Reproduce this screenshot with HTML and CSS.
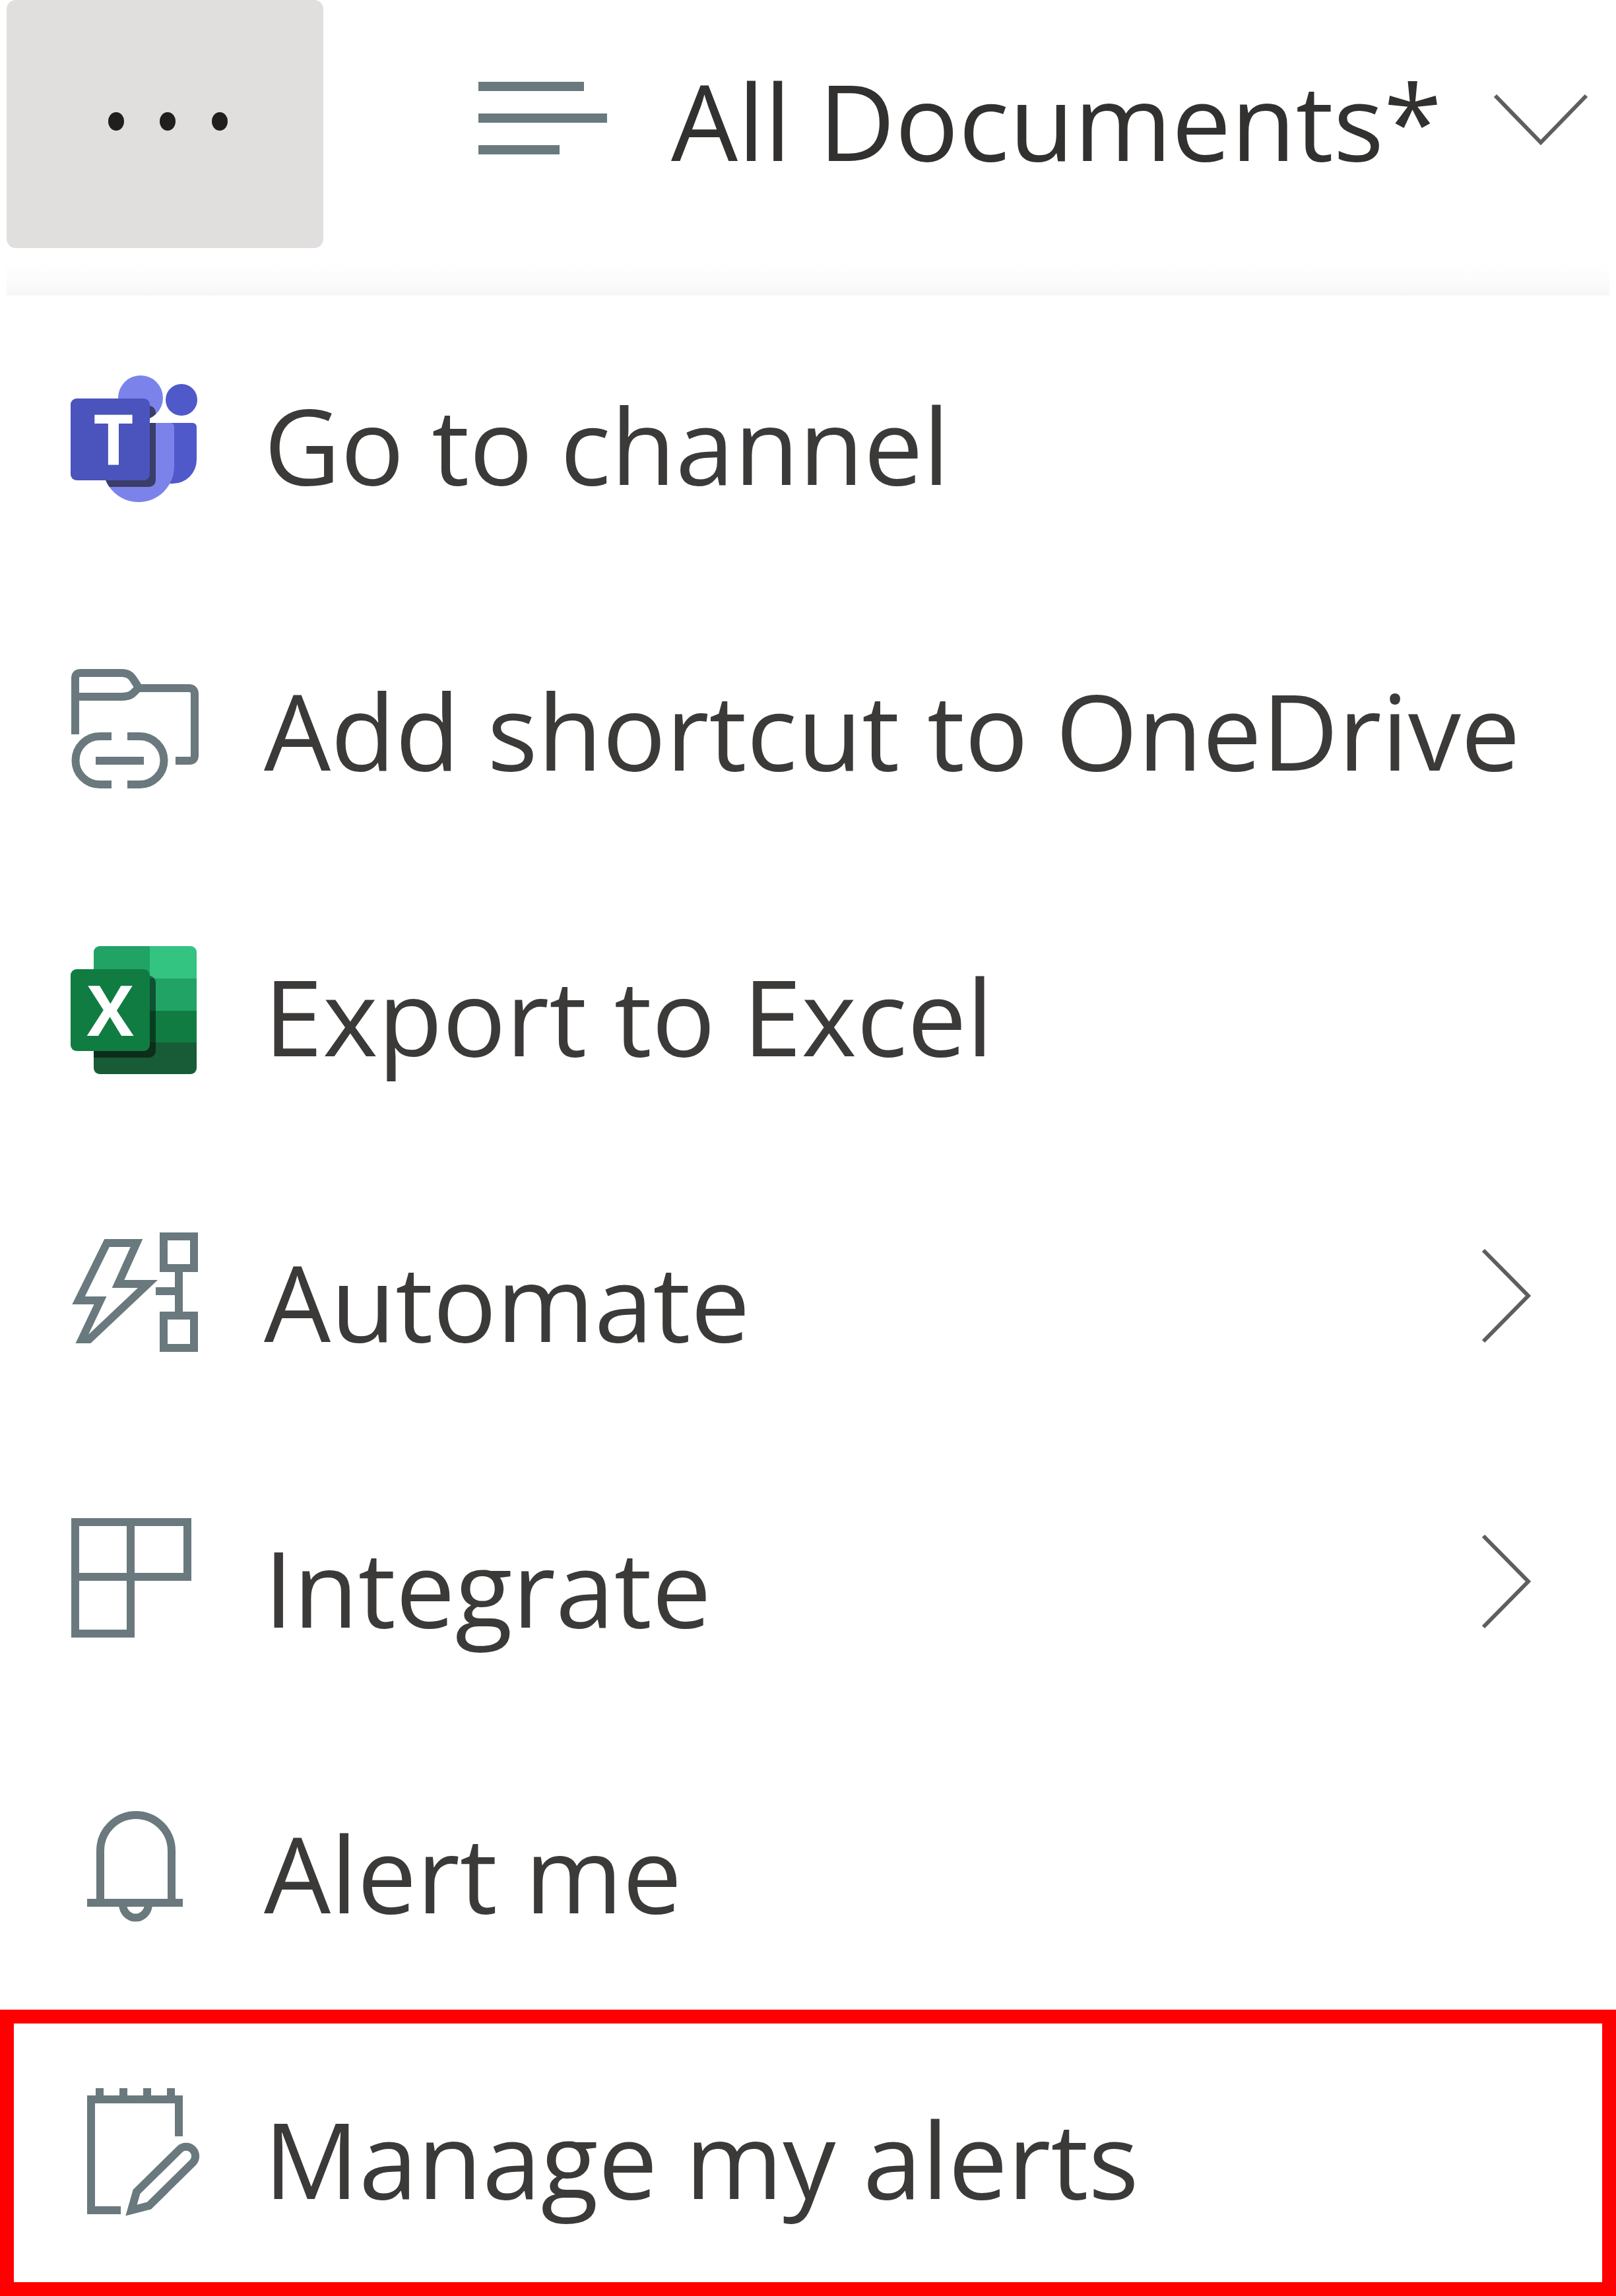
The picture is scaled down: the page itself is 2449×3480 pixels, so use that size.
FILE: index.html
```html
<!DOCTYPE html>
<html lang="en">
<head>
    <meta charset="UTF-8">
    <title>All Documents</title>
    <link rel="stylesheet" href="styles.css">
</head>
<body>
    <header class="command-bar">
        <button class="more-button" type="button" aria-label="More options" aria-expanded="true">
            <svg class="dots" viewBox="0 0 200 40">
                <ellipse cx="26" cy="20" rx="12" ry="14"/>
                <ellipse cx="104" cy="20" rx="12" ry="14"/>
                <ellipse cx="183" cy="20" rx="12" ry="14"/>
            </svg>
        </button>
        <button class="view-button" type="button">
            <svg class="view-icon" viewBox="0 0 200 120">
                <path d="M0 9H160M0 57H195M0 105H123"/>
            </svg>
            <span class="view-label">All Documents*</span>
            <svg class="chevron-down" viewBox="0 0 144 80">
                <path d="M3 3L72 74L141 3"/>
            </svg>
        </button>
    </header>

    <div class="menu-shadow"></div>

    <nav class="menu">
        <button class="menu-item" type="button">
            <svg class="icon" viewBox="0 0 200 200">
                <defs>
                    <clipPath id="teams-body">
                        <circle cx="107" cy="38" r="34"/>
                        <path d="M50 76H158V142a54 54 0 0 1-108 0z"/>
                    </clipPath>
                </defs>
                <circle cx="107" cy="38" r="34" fill="#7b83eb"/>
                <circle cx="169" cy="41" r="24" fill="#5059c9"/>
                <path d="M140 76H186a6 6 0 0 1 6 6V132a36 36 0 0 1-36 36H140z" fill="#5059c9"/>
                <path d="M50 76H152a6 6 0 0 1 6 6V142a54 54 0 0 1-108 0z" fill="#7b83eb"/>
                <rect x="40" y="50" width="90" height="123" rx="10" fill="#3a3e68" clip-path="url(#teams-body)"/>
                <rect x="1" y="39" width="120" height="124" rx="9" fill="#4b53bc"/>
                <text class="icon-letter" x="66" y="139">T</text>
            </svg>
            <span class="menu-label">Go to channel</span>
        </button>

        <button class="menu-item" type="button">
            <svg class="icon line" viewBox="0 0 200 200">
                <path d="M8 115V30q0-8 8-8H78c16 0 17 9 26 22c-9 10-12 14-26 14H8"/>
                <path d="M102 45H180q9 0 9 9V147q0 8-8 8H160"/>
                <path d="M63 118H45a36 36 0 0 0 0 73H63M87 118H106a36 36 0 0 1 0 73H87M39 155H112"/>
            </svg>
            <span class="menu-label">Add shortcut to OneDrive</span>
        </button>

        <button class="menu-item" type="button">
            <svg class="icon" viewBox="0 0 200 200">
                <defs>
                    <clipPath id="excel-sheet">
                        <rect x="36" y="3" width="156" height="194" rx="9"/>
                    </clipPath>
                </defs>
                <g clip-path="url(#excel-sheet)">
                    <path d="M36 3H121V52H36zM121 52H192V101H121z" fill="#21a366"/>
                    <path d="M121 3H192V52H121z" fill="#33c481"/>
                    <path d="M36 52H121V149H36zM121 101H192V149H121z" fill="#107c41"/>
                    <path d="M36 149H192V197H36z" fill="#185c37"/>
                    <rect x="10" y="48" width="120" height="124" rx="10" fill="#000" fill-opacity=".5"/>
                </g>
                <rect x="1" y="38" width="120" height="124" rx="9" fill="#107c41"/>
                <text class="icon-letter" x="61" y="139">X</text>
            </svg>
            <span class="menu-label">Export to Excel</span>
        </button>

        <button class="menu-item" type="button">
            <svg class="icon line" viewBox="0 0 200 200">
                <path d="M56 20H101L73 82H118L29 166H18L46 107H13z"/>
                <path d="M142 10H188V58H142zM142 130H188V179H142zM165 58V130M130 93H165"/>
            </svg>
            <span class="menu-label">Automate</span>
            <svg class="chevron-right" viewBox="0 0 76 144">
                <path d="M3 3L71 72L3 141"/>
            </svg>
        </button>

        <button class="menu-item" type="button">
            <svg class="icon line" viewBox="0 0 200 200">
                <path d="M8 10H178V93H8zM92 10V179H8V93"/>
            </svg>
            <span class="menu-label">Integrate</span>
            <svg class="chevron-right" viewBox="0 0 76 144">
                <path d="M3 3L71 72L3 141"/>
            </svg>
        </button>

        <button class="menu-item" type="button">
            <svg class="icon line" viewBox="0 0 200 200">
                <path d="M46 153V75a54 54 0 0 1 108 0V153M26 154H171M80 156a19 20 0 0 0 39 0"/>
            </svg>
            <span class="menu-label">Alert me</span>
        </button>

        <button class="menu-item highlighted" type="button">
            <svg class="icon line" viewBox="0 0 200 200">
                <path d="M77 187H32V19H165V75M45 19V2M81 19V2M117 19V2M153 19V2"/>
                <path d="M93 187L101 159L166 95a14 14 0 0 1 20 20L120 180z"/>
            </svg>
            <span class="menu-label">Manage my alerts</span>
        </button>
    </nav>
</body>
</html>
```

FILE: styles.css
```css
* { box-sizing: border-box; }
body {
    margin: 0;
    background: #fff;
    color: #3b3a39;
    font-family: "Open Sans", "Noto Sans", sans-serif;
    font-size: 160px;
    line-height: 220px;
}
button {
    margin: 0;
    padding: 0;
    border: none;
    background: none;
    color: inherit;
    font: inherit;
    text-align: left;
    cursor: pointer;
}
svg { display: block; flex-shrink: 0; }

/* top bar */
.command-bar {
    display: flex;
    height: 376px;
    padding-left: 10px;
}
.more-button {
    display: flex;
    align-items: center;
    justify-content: center;
    width: 480px;
    padding-bottom: 8px;
    background: #e1dfdd;
    border-radius: 14px;
}
.dots { width: 200px; height: 40px; fill: #201f1e; }
.view-button {
    display: flex;
    flex: 1;
    align-items: center;
    padding: 0 42px 12px 235px;
    color: #323130;
}
.view-icon { width: 200px; height: 120px; margin-right: 92px; }
.view-icon path { fill: none; stroke: #69797e; stroke-width: 14; }
.view-label { white-space: nowrap; }
.chevron-down { width: 144px; height: 80px; margin-left: auto; }
.chevron-down path,
.chevron-right path { fill: none; stroke: #605e5c; stroke-width: 6; }

.menu-shadow {
    height: 72px;
    margin: 0 10px;
    background: linear-gradient(#fff 20%, #fcfcfc 70%, #f6f6f6);
}

/* dropdown menu */
.menu { display: flex; flex-direction: column; }
.menu-item {
    display: flex;
    align-items: center;
    height: 433px;
    padding: 0 128px 0 106px;
}
.icon { width: 200px; height: 200px; margin-right: 94px; overflow: visible; }
.line path { fill: none; stroke: #69797e; stroke-width: 12; }
.icon-letter { fill: #fff; font-size: 106px; font-weight: 700; text-anchor: middle; }
.menu-label { padding-top: 16px; white-space: nowrap; }
.chevron-right { width: 76px; height: 144px; margin-left: auto; }
.highlighted {
    height: 434px;
    padding: 0 107px 0 85px;
    border: 21px solid #f00;
}
```
